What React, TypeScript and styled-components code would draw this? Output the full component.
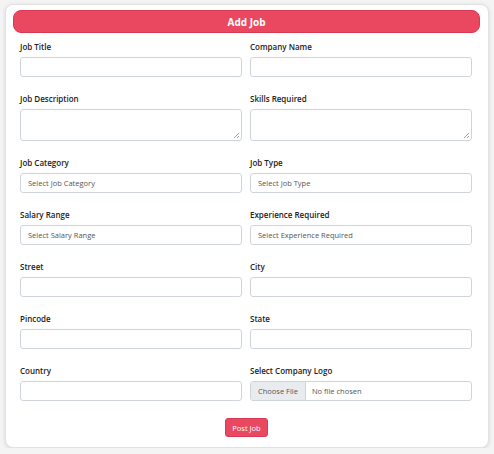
import React from 'react'
import styled, { createGlobalStyle } from 'styled-components'

const Global = createGlobalStyle`
  body { margin: 0; background: #f4f4f4; font-family: "Open Sans", "Noto Sans", sans-serif; }
`

const Card = styled.div`
  margin: 4px 5px 0 5px;
  height: 444px;
  box-sizing: border-box;
  background: #fff;
  border: 1px solid #e2e2e2;
  border-radius: 8px;
  box-shadow: 0 1px 4px rgba(0,0,0,0.12);
  padding: 5px 8px 0 7px;
`
const Header = styled.div`
  height: 21px;
  background: #ea4760;
  border: 1px solid #d83a52;
  border-radius: 8px;
  color: #fff;
  font-weight: 700;
  font-size: 10px;
  display: flex;
  align-items: center;
  justify-content: center;
`
const Grid = styled.div`
  display: grid;
  grid-template-columns: 222px 222px;
  column-gap: 8px;
  row-gap: 17px;
  padding: 9px 0 0 7px;
`
const Field = styled.div`
  display: flex;
  flex-direction: column;
`
const Label = styled.label`
  font-size: 8px;
  font-weight: 600;
  color: #222;
  height: 15px;
  line-height: 10px;
`
const Input = styled.div<{ $tall?: boolean }>`
  height: ${p => (p.$tall ? 32 : 20)}px;
  box-sizing: border-box;
  border: 1px solid #cfd4da;
  border-radius: 3px;
  font-size: 7.5px;
  color: #555;
  display: flex;
  align-items: center;
  padding-left: 7px;
  position: relative;
  overflow: hidden;
`
const Grip = styled.svg`
  position: absolute;
  right: 1px;
  bottom: 1px;
`
const FileBtn = styled.div`
  background: #e9ecef;
  border-right: 1px solid #cfd4da;
  height: 100%;
  display: flex;
  align-items: center;
  padding: 0 7px;
  margin-left: -7px;
  margin-right: 6px;
  color: #555;
`
const Footer = styled.div`
  display: flex;
  justify-content: center;
  padding-top: 17px;
`
const Button = styled.button`
  background: #ea4760;
  border: 1px solid #d83a52;
  border-radius: 3px;
  color: #fff;
  font-family: inherit;
  font-size: 7.5px;
  height: 19px;
  padding: 0 6px;
`

const fields: { label: string; ph?: string; tall?: boolean; file?: boolean }[] = [
  { label: 'Job Title' }, { label: 'Company Name' },
  { label: 'Job Description', tall: true }, { label: 'Skills Required', tall: true },
  { label: 'Job Category', ph: 'Select Job Category' }, { label: 'Job Type', ph: 'Select Job Type' },
  { label: 'Salary Range', ph: 'Select Salary Range' }, { label: 'Experience Required', ph: 'Select Experience Required' },
  { label: 'Street' }, { label: 'City' },
  { label: 'Pincode' }, { label: 'State' },
  { label: 'Country' }, { label: 'Select Company Logo', file: true },
]

export default function App() {
  return (
    <>
      <Global />
      <Card>
        <Header>Add Job</Header>
        <Grid>
          {fields.map(f => (
            <Field key={f.label}>
              <Label>{f.label}</Label>
              <Input $tall={f.tall}>
                {f.file ? (<><FileBtn>Choose File</FileBtn>No file chosen</>) : f.ph}
                {f.tall && (
                  <Grip width="7" height="7" viewBox="0 0 7 7">
                    <path d="M6 1L1 6M6 4L4 6" stroke="#888" strokeWidth="0.8" />
                  </Grip>
                )}
              </Input>
            </Field>
          ))}
        </Grid>
        <Footer><Button>Post Job</Button></Footer>
      </Card>
    </>
  )
}
